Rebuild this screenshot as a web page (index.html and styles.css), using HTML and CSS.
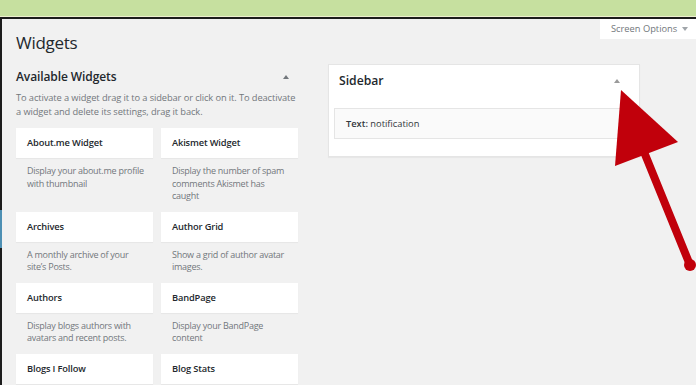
FILE: index.html
```html
<!DOCTYPE html>
<html lang="en">
<head>
<meta charset="utf-8">
<title>Widgets</title>
<link rel="stylesheet" href="styles.css">
</head>
<body>
<div class="topbar"></div>
<div class="screen">
  <div class="header">
    <h1 class="title">Widgets</h1>
    <div class="screen-tab">Screen Options <span class="caret-down"></span></div>
  </div>
  <div class="columns">
    <div class="available">
      <div class="sec-head">
        <h2 class="sec-title">Available Widgets</h2>
        <span class="caret-up"></span>
      </div>
      <p class="intro">To activate a widget drag it to a sidebar or click on it. To deactivate a widget and delete its settings, drag it back.</p>
      <div class="grid">
        <div class="widget"><div class="card">About.me Widget</div><div class="desc">Display your about.me profile with thumbnail</div></div>
        <div class="widget"><div class="card">Akismet Widget</div><div class="desc">Display the number of spam comments Akismet has caught</div></div>
        <div class="widget"><div class="card">Archives</div><div class="desc">A monthly archive of your site’s Posts.</div></div>
        <div class="widget"><div class="card">Author Grid</div><div class="desc">Show a grid of author avatar images.</div></div>
        <div class="widget"><div class="card">Authors</div><div class="desc">Display blogs authors with avatars and recent posts.</div></div>
        <div class="widget"><div class="card">BandPage</div><div class="desc">Display your BandPage content</div></div>
        <div class="widget"><div class="card">Blogs I Follow</div></div>
        <div class="widget"><div class="card">Blog Stats</div></div>
      </div>
    </div>
    <div class="sidebars">
      <div class="sidebar-box">
        <div class="sb-head">
          <h2 class="sb-title">Sidebar</h2>
          <span class="caret-up light"></span>
        </div>
        <div class="sb-widget"><b>Text:</b> notification</div>
      </div>
    </div>
  </div>
  <span class="edge-mark"></span>
</div>
<svg class="arrow" width="120" height="200" viewBox="0 0 120 200" aria-hidden="true">
  <line x1="38" y1="60" x2="86" y2="178" stroke="#c1000b" stroke-width="8" stroke-linecap="round"/>
  <circle cx="86" cy="178" r="6" fill="#c1000b"/>
  <polygon points="17,3 74,55 11,79" fill="#c1000b"/>
</svg>
</body>
</html>
```
FILE: styles.css
```css
html, body {
  margin: 0;
  padding: 0;
  background: #f1f1f1;
  font-family: "Open Sans", "Noto Sans", sans-serif;
  color: #23282d;
  overflow: hidden;
}
body {
  position: relative;
  width: 696px;
  height: 385px;
}
.topbar {
  height: 16px;
  background: #c6e09f;
  border-bottom: 1px solid #eef1cf;
}
.screen {
  position: relative;
  border-top: 2px solid #1c1c1c;
  border-left: 2px solid #1c1c1c;
  background: #f1f1f1;
  height: 366px;
}
.header {
  display: flex;
  justify-content: space-between;
  align-items: flex-start;
}
.title {
  margin: 12px 0 0 14px;
  font-size: 17px;
  letter-spacing: -0.3px;
  line-height: 24px;
  font-weight: 400;
  color: #23282d;
}
.screen-tab {
  width: 85px;
  height: 20px;
  padding-left: 11px;
  background: #fff;
  color: #72777c;
  font-size: 9.3px;
  line-height: 20px;
  display: flex;
  align-items: center;
  gap: 5px;
}
.caret-down {
  width: 0;
  height: 0;
  border-left: 3px solid transparent;
  border-right: 3px solid transparent;
  border-top: 4px solid #a0a5aa;
}
.caret-up {
  width: 0;
  height: 0;
  border-left: 3px solid transparent;
  border-right: 3px solid transparent;
  border-bottom: 4px solid #72777c;
}
.caret-up.light {
  border-bottom-color: #9a9a9a;
}
.columns {
  display: flex;
  align-items: flex-start;
  padding-left: 14px;
  margin-top: 9px;
}
.available {
  width: 281px;
  padding-top: 4px;
}
.sec-head {
  display: flex;
  justify-content: space-between;
  align-items: center;
  padding-right: 8px;
}
.sec-title {
  margin: 0;
  font-size: 12px;
  letter-spacing: -0.1px;
  line-height: 18px;
  font-weight: 600;
  color: #23282d;
}
.intro {
  margin: 5px 0 10px;
  font-size: 9.3px;
  letter-spacing: -0.1px;
  line-height: 13.5px;
  color: #72777c;
}
.grid {
  display: grid;
  grid-template-columns: 137px 137px;
  column-gap: 8px;
}
.card {
  height: 30px;
  background: #fff;
  padding-left: 11px;
  font-size: 9.3px;
  letter-spacing: -0.15px;
  line-height: 30px;
  font-weight: 600;
  color: #23282d;
  box-shadow: 0 1px 1px rgba(0,0,0,0.04);
}
.desc {
  padding: 7px 8px 9px 11px;
  font-size: 9px;
  letter-spacing: -0.25px;
  line-height: 12.5px;
  color: #72777c;
}
.sidebars {
  margin-left: 31px;
  width: 312px;
}
.sidebar-box {
  background: #fff;
  border: 1px solid #e5e5e5;
  box-shadow: 0 1px 1px rgba(0,0,0,0.04);
  padding: 7px 5px 17px;
}
.sb-head {
  display: flex;
  justify-content: space-between;
  align-items: center;
  padding: 0 14px 0 5px;
  height: 18px;
}
.sb-title {
  margin: 0;
  font-size: 12.2px;
  line-height: 18px;
  font-weight: 600;
  color: #23282d;
}
.sb-widget {
  margin-top: 18px;
  height: 29px;
  border: 1px solid #e5e5e5;
  background: #fafafa;
  padding-left: 11px;
  font-size: 9.3px;
  line-height: 29px;
  color: #32373c;
}
.sb-widget b {
  font-weight: 600;
}
.edge-mark {
  position: absolute;
  left: -2px;
  top: 191px;
  width: 2px;
  height: 38px;
  background: #4d8fb3;
}
.arrow {
  position: absolute;
  left: 604px;
  top: 87px;
}
```
